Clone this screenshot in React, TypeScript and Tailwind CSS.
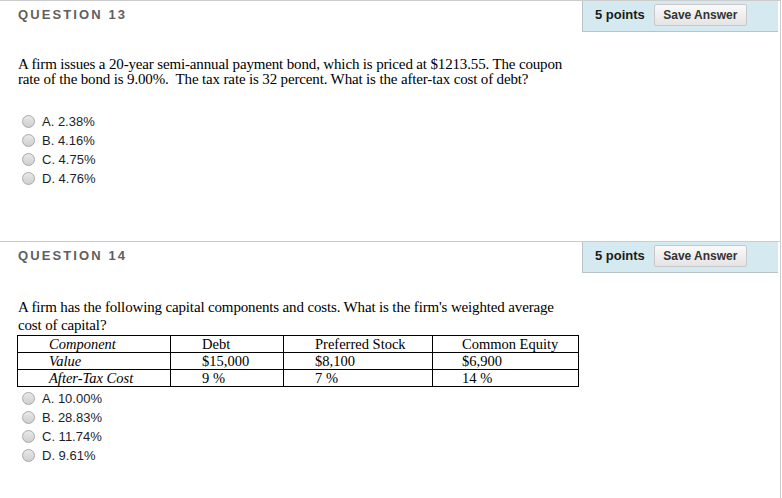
import React from 'react'

const serif = { fontFamily: '"Liberation Serif", "Times New Roman", serif' }
const sans = { fontFamily: '"Liberation Sans", Arial, sans-serif' }

function Header({ n }: { n: number }) {
  return (
    <div className="flex h-[32px] border-t border-[#cccccc]">
      <div className="pl-[18px] pt-[4px] text-[13px] font-bold tracking-[2.1px] text-[#606060]" style={sans}>
        QUESTION {n}
      </div>
      <div
        className="ml-auto mr-[2px] flex w-[196px] items-start gap-[9px] border-b border-l border-[#b9c3c6] bg-[#d5eaf0] pl-[12px] pt-[3px]"
        style={sans}
      >
        <span className="pt-[1px] text-[13px] font-bold text-[#1a1a1a]">5 points</span>
        <button
          type="button"
          className="h-[22px] w-[93px] rounded-[2px] border border-[#c8c8c8] bg-gradient-to-b from-[#fafafa] to-[#e4e4e4] text-[12px] font-bold text-[#333333]"
        >
          Save Answer
        </button>
      </div>
    </div>
  )
}

function Options({ items }: { items: string[] }) {
  return (
    <div className="flex flex-col" style={sans}>
      {items.map((t) => (
        <label key={t} className="flex h-[19px] items-center gap-[7px] pl-[22px] text-[13px] text-[#1d1d2b]">
          <span className="h-[13px] w-[13px] rounded-full border border-[#a9a9a9] bg-gradient-to-b from-[#e8e8e8] to-[#cfcfcf]" />
          {t}
        </label>
      ))}
    </div>
  )
}

export default function App() {
  const rows = [
    ['Component', 'Debt', 'Preferred Stock', 'Common Equity'],
    ['Value', '$15,000', '$8,100', '$6,900'],
    ['After-Tax Cost', '9 %', '7 %', '14 %'],
  ]
  const widths = ['w-[153px]', 'w-[113px]', 'w-[149px]', 'w-[146px]']

  return (
    <div className="min-h-[498px] w-[781px] border-r border-[#cccccc] bg-white">
      <section className="h-[241px]">
        <Header n={13} />
        <p className="mt-[25px] pl-[18px] text-[15px] leading-[15px] tracking-[-0.15px] text-black" style={serif}>
          A firm issues a 20-year semi-annual payment bond, which is priced at $1213.55. The coupon
          <br />
          rate of the bond is 9.00%.&nbsp; The tax rate is 32 percent. What is the after-tax cost of debt?
        </p>
        <div className="mt-[25px]">
          <Options items={['A. 2.38%', 'B. 4.16%', 'C. 4.75%', 'D. 4.76%']} />
        </div>
      </section>

      <section>
        <Header n={14} />
        <p className="mt-[25px] pl-[18px] text-[15px] leading-[18px] tracking-[-0.15px] text-black" style={serif}>
          A firm has the following capital components and costs. What is the firm's weighted average
          <br />
          cost of capital?
        </p>
        <table className="ml-[17px] mt-[1px] border-collapse text-[14.5px] leading-[16px] text-black" style={serif}>
          <tbody>
            {rows.map((r) => (
              <tr key={r[0]}>
                {r.map((c, i) => (
                  <td
                    key={i}
                    className={`${widths[i]} h-[17px] border border-black p-0 ${i === 3 ? 'pl-[29px]' : 'pl-[31px]'} ${i === 0 ? 'italic' : ''}`}
                  >
                    {c}
                  </td>
                ))}
              </tr>
            ))}
          </tbody>
        </table>
        <div className="mt-[2px]">
          <Options items={['A. 10.00%', 'B. 28.83%', 'C. 11.74%', 'D. 9.61%']} />
        </div>
      </section>
    </div>
  )
}
